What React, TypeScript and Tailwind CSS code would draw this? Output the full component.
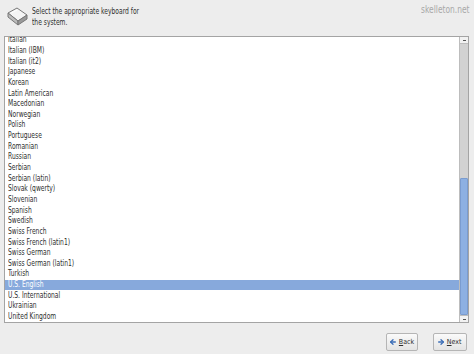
import React from 'react';
import { ArrowLeft, ArrowRight } from 'lucide-react';

const layouts = [
  'Italian',
  'Italian (IBM)',
  'Italian (it2)',
  'Japanese',
  'Korean',
  'Latin American',
  'Macedonian',
  'Norwegian',
  'Polish',
  'Portuguese',
  'Romanian',
  'Russian',
  'Serbian',
  'Serbian (latin)',
  'Slovak (qwerty)',
  'Slovenian',
  'Spanish',
  'Swedish',
  'Swiss French',
  'Swiss French (latin1)',
  'Swiss German',
  'Swiss German (latin1)',
  'Turkish',
  'U.S. English',
  'U.S. International',
  'Ukrainian',
  'United Kingdom',
];

const KeyboardIcon = () => (
  <svg width="24" height="20" viewBox="0 0 24 20">
    <path d="M3 7 L12 2 L22 9 L13 15 Z" fill="#f4f4f4" stroke="#777" strokeWidth="1" />
    <path d="M3 7 L3 11 L13 19 L13 15 Z" fill="#bdbdbd" stroke="#777" strokeWidth="1" />
    <path d="M13 15 L13 19 L22 13 L22 9 Z" fill="#9a9a9a" stroke="#777" strokeWidth="1" />
    <path d="M6 7 L12 4" stroke="#fff" strokeWidth="1" />
  </svg>
);

export default function App() {
  const selected = 'U.S. English';

  return (
    <div className="w-[474px] h-[354px] bg-[#ededed] flex flex-col relative overflow-hidden" style={{ fontFamily: '"DejaVu Sans", sans-serif' }}>
      <span className="absolute top-[2px] right-[5px] text-[10px] text-[#a8a8a8] inline-block origin-right scale-x-75">skelleton.net</span>

      {/* Header */}
      <div className="flex items-start gap-[3px] pl-[5px] pt-[6px] h-[36px]">
        <KeyboardIcon />
        <p className="text-[8px] leading-[11px] text-[#2e2e2e] inline-block origin-left scale-x-75 whitespace-nowrap">
          Select the appropriate keyboard for
          <br />
          the system.
        </p>
      </div>

      {/* List box */}
      <div className="ml-[4px] mr-[5px] h-[287px] border border-[#a4a4a4] bg-white flex">
        <div className="flex-1 overflow-hidden relative">
          <div className="flex flex-col -mt-[2px]">
            {layouts.map(name => (
              <div
                key={name}
                className={
                  name === selected
                    ? 'h-[10.65px] flex items-center pl-[3px] bg-[#87a9dc] text-white text-[8px]'
                    : 'h-[10.65px] flex items-center pl-[3px] text-[#2e2e2e] text-[8px]'
                }
              >
                <span className="inline-block origin-left scale-x-75 whitespace-nowrap">{name}</span>
              </div>
            ))}
          </div>
        </div>

        {/* Scrollbar */}
        <div className="w-[9px] bg-[#d2d2d2] border-l border-[#bdbdbd] flex flex-col">
          <div className="h-[7px] bg-[#f2f2f2] border-b border-[#bdbdbd] flex items-center justify-center">
            <div className="w-[3px] h-[1px] bg-[#555]" />
          </div>
          <div className="flex-1 flex flex-col">
            <div className="h-[134px]" />
            <div className="flex-1 bg-[#8db0e2] border border-[#7a9cd0] rounded-[1px]" />
          </div>
          <div className="h-[7px] bg-[#f2f2f2] border-t border-[#bdbdbd] flex items-center justify-center">
            <div className="w-[3px] h-[1px] bg-[#555]" />
          </div>
        </div>
      </div>

      {/* Buttons */}
      <div className="flex justify-end gap-[15px] pr-[7px] pt-[10px]">
        <button className="h-[18px] w-[32px] border border-[#b5b5b5] rounded-[2px] bg-gradient-to-b from-[#fafafa] to-[#e4e4e4] flex items-center justify-center gap-[1px] text-[7px] text-[#2e2e2e]">
          <ArrowLeft size={8} strokeWidth={4} className="text-[#3d6fb8]" />
          <span className="inline-block scale-x-90"><u>B</u>ack</span>
        </button>
        <button className="h-[18px] w-[34px] border border-[#b5b5b5] rounded-[2px] bg-gradient-to-b from-[#fafafa] to-[#e4e4e4] flex items-center justify-center gap-[1px] text-[7px] text-[#2e2e2e]">
          <ArrowRight size={8} strokeWidth={4} className="text-[#3d6fb8]" />
          <span className="inline-block scale-x-90"><u>N</u>ext</span>
        </button>
      </div>
    </div>
  );
}
